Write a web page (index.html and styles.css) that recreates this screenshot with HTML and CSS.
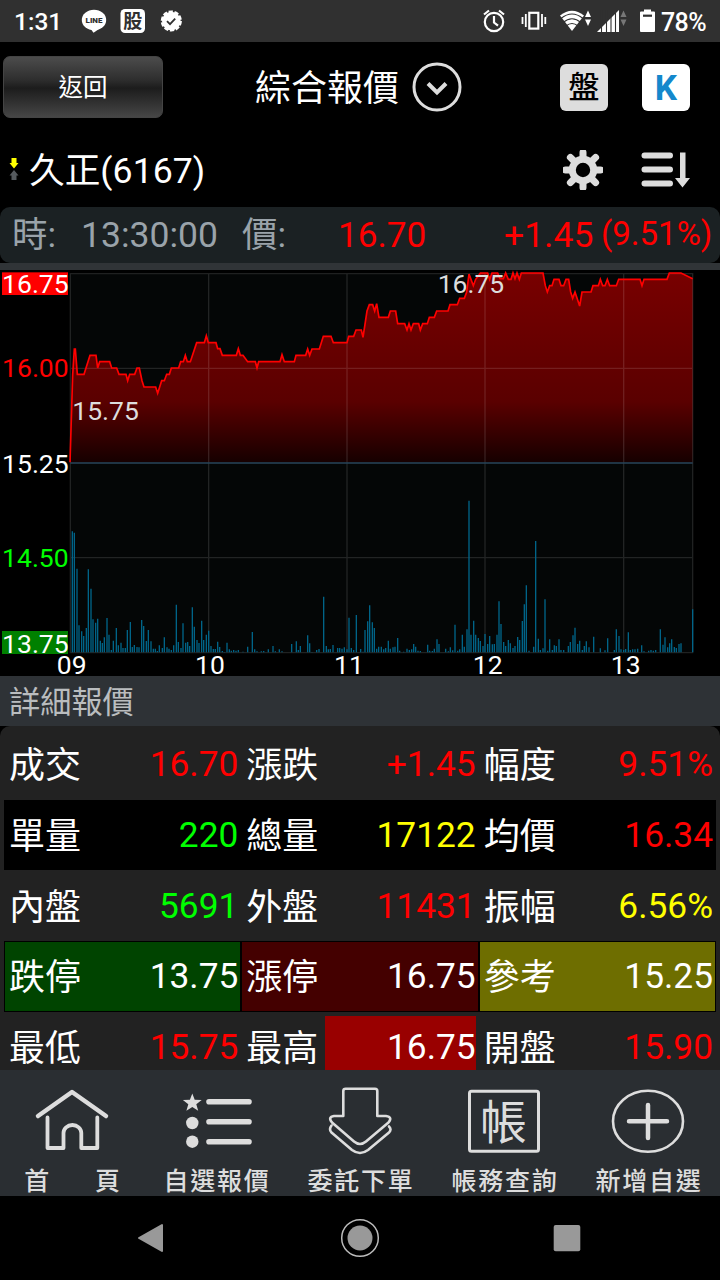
FILE: index.html
```html
<!DOCTYPE html>
<html lang="zh-Hant">

<head>
    <meta charset="UTF-8">
    <meta name="viewport" content="width=device-width, initial-scale=1.0">
    <title>綜合報價</title>

    <link rel="stylesheet" href="styles.css">
</head>
<body>

    <div class="status-bar">
        <span class="clock">1:31</span>
        <svg class="status-left" viewBox="80 0 104 42">
            <ellipse cx="94" cy="20" rx="12.2" ry="10.3" fill="#fff"/>
            <path d="M90 28L93.5 32.8Q98 30 102 26z" fill="#fff"/>
            <text x="94" y="22.8" class="line-text">LINE</text>
            <rect x="120.5" y="9" width="24.5" height="24" rx="4.5" fill="#fff"/>
            <text x="132.7" y="28" class="stock-text">股</text>
            <circle cx="171.3" cy="21" r="9.3" fill="#fff" stroke="#fff" stroke-width="2.6" stroke-dasharray="4.2 1.643"/>
            <path d="M167 21.2l3 3 5.2-5.6" fill="none" stroke="#303030" stroke-width="1.8"/>
        </svg>
        <svg class="status-right" viewBox="480 0 176 42">
            <!-- alarma -->
            <g fill="none" stroke="#fff" stroke-width="2.2">
                <circle cx="493" cy="22" r="9.2"/>
                <path d="M493 16v6.500l4 3.200M483 14.500l5-4M503 14.500l-5-4"/>
            </g>
            <!-- vibración -->
            <rect x="528.3" y="12.8" width="9" height="15.800" fill="none" stroke="#fff" stroke-width="2.2"/>
            <path d="M524.800 14v13M521.500 17v7M541 14v13M544.300 17v7" stroke="#fff" stroke-width="1.800"/>
            <!-- wifi -->
            <path d="M559 15.500Q571 6 583 15.500L571 31z" fill="#fff"/>
            <path d="M560 18.500Q571 9.500 582 18.500M562 22.500Q571 15 580 22.500M565 26Q571 21 577 26" fill="none" stroke="#303030" stroke-width="1.100"/>
            <path d="M584 17l3-6.500 3 6.500zM584 19.500l3 6.500 3-6.500z" fill="#fff"/>
            <!-- señal -->
            <path d="M596 32L618 10V32z" fill="#fff"/>
            <path d="M600.500 10v23M605.500 10v23M610 10v23M614.500 10v23" stroke="#303030" stroke-width="1.100"/>
            <path d="M619.500 17l3-6.500 3 6.500zM619.500 19.500l3 6.500 3-6.500z" fill="#777"/>
            <!-- batería -->
            <path d="M640 11.500h3V9.500h7v2h3a1 1 0 0 1 1 1V31a1 1 0 0 1-1 1h-13a1 1 0 0 1-1-1V12.500a1 1 0 0 1 1-1z" fill="#fff"/>
            <path d="M642 15.700h9" stroke="#303030" stroke-width="2.200"/>
        </svg>
        <span class="battery">78%</span>
    </div>

    <div class="header">
        <button class="btn">返回</button>
        <h1>綜合報價</h1>
        <svg class="drop" viewBox="0 0 50 50">
            <circle cx="25" cy="25" r="23"/>
            <path d="M16 21.500l9 9 9-9" stroke-width="4"/>
        </svg>
        <span class="square gray">盤</span>
        <span class="square white">K</span>
    </div>

    <div class="name-row">
        <svg class="arrows" viewBox="0 0 10 24">
            <path d="M2.500 0h5v5H9.500L5 10.500.500 5h2z" fill="#ff0"/>
            <path d="M5 12l4.500 5.500h-2V22h-5v-4.500h-2z" fill="#555a5e"/>
        </svg>
        <span class="name">久正(6167)</span>
        <svg class="gear" viewBox="-20 -20 40 40">
            <circle r="10.700"/>
            <path d="M0-12V-17.500M0 12V17.500M-12 0H-17.500M12 0H17.500M-8.500-8.500L-12.600-12.600M8.500 8.500L12.600 12.600M-8.500 8.500L-12.600 12.600M8.500-8.500L12.600-12.600"/>
        </svg>
        <svg class="sort" viewBox="0 0 50 36">
            <path d="M3.500 3.500H29M3.500 17.500H29M3.500 31.500H29" stroke="#ddd" stroke-width="6" stroke-linecap="round"/>
            <path d="M39 .500h5.500V26H49L41.500 35.500 34 26h5z" fill="#ddd"/>
        </svg>
    </div>

    <div class="quote-bar">
        <span class="t-label">時:</span>
        <span class="t-time">13:30:00</span>
        <span class="t-label2">價:</span>
        <span class="t-price">16.70</span>
        <span class="t-change">+1.45</span>
        <span class="t-percent">(9.51%)</span>
    </div>

    <svg class="chart" viewBox="0 30 2160 1218">
        <defs>
            <linearGradient id="redFill" gradientUnits="userSpaceOnUse" x1="0" y1="39" x2="0" y2="607">
                <stop offset="0" stop-color="#780000"/>
                <stop offset="0.68" stop-color="#5a0000"/>
                <stop offset="1" stop-color="#160000"/>
            </linearGradient>
        </defs>
        <rect x="211" y="41" width="1867" height="1137" fill="#040606"/>
        <path id="priceArea" fill="url(#redFill)"/>
        <path class="grid" d="M211 41H2078V1178H211zM626 41V1178M1041 41V1178M1455 41V1178M1871 41V1178M211 325H2078M211 893H2078"/>
        <path id="volume"/>
        <path d="M211 609H2078" stroke="#29445a" stroke-width="5"/>
        <path id="priceLine"/>

        <rect x="6" y="37" width="198" height="68" fill="#f00"/>
        <rect x="6" y="1113" width="198" height="69" fill="#008000"/>
        <g class="axis" text-anchor="end">
            <text x="206" y="98">16.75</text>
            <text x="206" y="352" fill="#f00">16.00</text>
            <text x="206" y="638">15.25</text>
            <text x="206" y="922" fill="#0f0">14.50</text>
            <text x="206" y="1178">13.75</text>
        </g>
        <g class="axis" text-anchor="middle">
            <text x="215" y="1243">09</text>
            <text x="630" y="1243">10</text>
            <text x="1047" y="1243">11</text>
            <text x="1463" y="1243">12</text>
            <text x="1877" y="1243">13</text>
        </g>
        <g class="axis mark">
            <text x="217" y="480">15.75</text>
            <text x="1313" y="100">16.75</text>
        </g>
    </svg>

    <div class="section-title">詳細報價</div>

    <div class="detail">
        <div class="row">
            <div class="cell"><span>成交</span><b class="red">16.70</b></div>
            <div class="cell"><span>漲跌</span><b class="red">+1.45</b></div>
            <div class="cell"><span>幅度</span><b class="red">9.51%</b></div>
        </div>
        <div class="row black">
            <div class="cell"><span>單量</span><b class="green">220</b></div>
            <div class="cell"><span>總量</span><b class="yellow">17122</b></div>
            <div class="cell"><span>均價</span><b class="red">16.34</b></div>
        </div>
        <div class="row">
            <div class="cell"><span>內盤</span><b class="green">5691</b></div>
            <div class="cell"><span>外盤</span><b class="red">11431</b></div>
            <div class="cell"><span>振幅</span><b class="yellow">6.56%</b></div>
        </div>
        <div class="row limits">
            <div class="cell down"><span>跌停</span><b>13.75</b></div>
            <div class="cell up"><span>漲停</span><b>16.75</b></div>
            <div class="cell ref"><span>參考</span><b>15.25</b></div>
        </div>
        <div class="row">
            <div class="cell"><span>最低</span><b class="red">15.75</b></div>
            <div class="cell"><span>最高</span><b class="hit">16.75</b></div>
            <div class="cell"><span>開盤</span><b class="red">15.90</b></div>
        </div>
    </div>

    <div class="tabs">
        <div class="tab">
            <svg viewBox="0 0 76 76">
                <path d="M4 32L38 8 72 32" stroke-width="4.500"/>
                <path d="M13.500 33.500V64H29.500V49a8.900 8 0 0 1 17.800 0V64H63.300V33.500" stroke-width="3.800"/>
            </svg>
            <span class="wide">首<i></i>頁</span>
        </div>
        <div class="tab">
            <svg viewBox="0 0 76 76">
                <path d="M14.300 9.500l2.400 6.200 7 .300-5.400 4.200 1.900 6.600-5.900-3.800-5.900 3.800 1.900-6.600L4.900 16l7-.300z" class="solid"/>
                <circle cx="14.300" cy="39" r="6.200" class="solid"/>
                <circle cx="14.300" cy="57.700" r="6.200" class="solid"/>
                <path d="M31 17.700H71M31 37.700H71M31 57.700H71" stroke-width="5.600"/>
            </svg>
            <span>自選報價</span>
        </div>
        <div class="tab">
            <svg viewBox="0 0 76 76">
                <path d="M21.300 32V7q0-2.300 2.300-2.300H53q2.300 0 2.300 2.300V32H64q7 1 2.500 6.500L44 57.500q-6 5-12 0L10 38.500Q5.500 33 12 32zM9.500 41.500q-3 4 0 7L30 66q8 6 16 0L67 48.500q3-3 0-6" stroke-width="2.600"/>
            </svg>
            <span>委託下單</span>
        </div>
        <div class="tab">
            <svg viewBox="0 0 76 76">
                <rect x="3.500" y="7.300" width="69" height="60" rx="2" stroke-width="3"/>
                <text x="37.500" y="54.500" class="account">帳</text>
            </svg>
            <span>帳務查詢</span>
        </div>
        <div class="tab">
            <svg viewBox="0 0 76 76">
                <ellipse cx="38" cy="37.300" rx="35" ry="30.500" stroke-width="2.600"/>
                <path d="M19 37.300H57M38 21V54" stroke-width="4.500"/>
            </svg>
            <span>新增自選</span>
        </div>
    </div>

    <div class="nav-bar">
        <svg viewBox="0 0 40 40"><path d="M7 20L30 7V33z" fill="#999" stroke="#999" stroke-width="2" stroke-linejoin="round"/></svg>
        <svg viewBox="0 0 40 40"><circle cx="20" cy="20" r="18.300" fill="none" stroke="#bbb" stroke-width="1.500"/><circle cx="20" cy="20" r="12.500" fill="#999"/></svg>
        <svg viewBox="0 0 40 40"><rect x="6.700" y="7" width="26.600" height="26.300" rx="2" fill="#999"/></svg>
    </div>

    <script src="script.js"></script>
</body>
</html>
```

FILE: styles.css
```css
body {
    margin: 0;
    padding: 0;
    width: 720px;
    height: 1280px;
    overflow: hidden;
    display: flex;
    flex-direction: column;
    background-color: #000;
    color: #fff;
    font-family: Roboto, 'Noto Sans CJK TC', sans-serif;
    font-size: 36px;
    line-height: 1;
}

svg {
    display: block;
    flex: none;
}

span, b {
    white-space: nowrap;
}

.status-bar {
    height: 42px;
    flex: none;
    box-sizing: border-box;
    padding: 0 14px;
    display: flex;
    align-items: center;
    background-color: #303030;
    font-size: 25px;
    font-weight: 500;
}

.clock {
    width: 66px;
    padding-top: 3px;
    font-size: 24.5px;
}

.battery {
    padding: 3px 0 0 4px;
    letter-spacing: -0.6px;
}

.status-left {
    width: 104px;
    height: 42px;
    margin-right: auto;
}

.status-right {
    width: 176px;
    height: 42px;
    margin-right: 0;
}

.line-text {
    font-size: 8px;
    font-weight: 900;
    fill: #303030;
    text-anchor: middle;
}

.stock-text {
    font-size: 19px;
    font-weight: 700;
    fill: #303030;
    text-anchor: middle;
}

.header {
    height: 90px;
    flex: none;
    display: flex;
    align-items: center;
}

.btn {
    width: 160px;
    height: 62px;
    margin: 0 92px 0 3px;
    padding: 2px 0 0;
    flex: none;
    border: 1px solid #444;
    border-radius: 7px;
    background: linear-gradient(#4c4c4c 0%, #2e2e2e 38%, #1c1c1c 52%, #464646 100%);
    color: #fff;
    font-family: inherit;
    font-size: 24.5px;
    line-height: 58px;
}

h1 {
    margin: 0;
    padding-top: 4px;
    width: 157px;
    flex: none;
    font-size: 36px;
    font-weight: 400;
}

.drop {
    width: 50px;
    height: 50px;
    margin-right: 98px;
    fill: none;
    stroke: #ddd;
    stroke-width: 3;
}

.square {
    width: 48px;
    height: 47px;
    margin-right: 34px;
    flex: none;
    border-radius: 6px;
    text-align: center;
    line-height: 48px;
}

.gray {
    background-color: #ddd;
    color: #000;
    font-size: 31px;
    font-weight: 500;
}

.white {
    background-color: #fff;
    color: #1488cc;
    font-size: 35px;
    font-weight: 700;
    line-height: 50px;
}

.name-row {
    height: 75px;
    flex: none;
    display: flex;
    align-items: center;
}

.arrows {
    width: 10px;
    height: 24px;
    margin: 0 10px 0 9px;
}

.name {
    width: 534px;
    padding-top: 4px;
    font-size: 35.7px;
}

.gear {
    width: 40px;
    height: 40px;
    margin-right: 38px;
    fill: none;
    stroke: #ddd;
    stroke-width: 7;
    stroke-linecap: round;
}

.sort {
    width: 50px;
    height: 36px;
}

.quote-bar {
    height: 56px;
    flex: none;
    border-radius: 10px;
    display: flex;
    align-items: center;
    background-color: #1b2123;
    color: #9aa3aa;
    font-size: 35.5px;
}

.t-label {
    width: 69px;
    padding: 2px 0 0 12px;
}

.t-time {
    width: 161px;
    padding-top: 1px;
}

.t-label2 {
    width: 96px;
    padding-top: 2px;
}

.t-price {
    width: 166px;
    padding-top: 1px;
    color: #f00;
    font-size: 35.2px;
}

.t-change {
    width: 97px;
    padding-top: 1px;
    color: #f00;
}

.t-percent {
    color: #f00;
    font-size: 33px;
    padding-bottom: 4px;
}

.chart {
    width: 720px;
    height: 406px;
    border-top: 7px solid #303437;
}

.grid {
    fill: none;
    stroke: #fff;
    stroke-opacity: 0.12;
    stroke-width: 4;
}

#volume {
    stroke: #006488;
    stroke-width: 4;
}

#priceLine {
    fill: none;
    stroke: #f00;
    stroke-width: 5;
}

.axis {
    fill: #fff;
    font-size: 79.5px;
}

.mark {
    fill: #ddd;
}

.section-title {
    height: 50px;
    flex: none;
    padding-left: 9px;
    background-color: #2e3236;
    color: #babdbf;
    font-size: 31.2px;
    line-height: 54px;
}

.detail {
    height: 344px;
    flex: none;
    box-sizing: border-box;
    padding: 3px 4px 0;
    overflow: hidden;
    border-radius: 10px 10px 0 0;
    background-color: #222;
}

.row {
    height: 70.7px;
    display: flex;
}

.black {
    background-color: #000;
}

.cell {
    flex: 1;
    display: flex;
    align-items: center;
    justify-content: space-between;
    padding: 0 3px 0 5px;
    line-height: 70px;
}

.cell span {
    padding-top: 4px;
    line-height: 66px;
}

.cell b {
    font-size: 35.3px;
    font-weight: 400;
}

.red {
    color: #f00;
}

.green {
    color: #0f0;
}

.yellow {
    color: #ff0;
}

.limits .cell {
    box-sizing: border-box;
    border: 1px solid #000;
    padding: 0 2px 0 4px;
    line-height: 66px;
}

.down {
    background-color: #004400;
}

.up {
    background-color: #440000;
}

.ref {
    background-color: #6e6e00;
}

.cell .hit {
    width: 151px;
    margin-top: 4px;
    line-height: 62px;
    padding-bottom: 4px;
    text-align: right;
    background-color: #990000;
}

.tabs {
    height: 126px;
    flex: none;
    display: flex;
    background-color: #2a2e32;
    color: #ddd;
}

.tab {
    width: 144px;
    display: flex;
    flex-direction: column;
    align-items: center;
    padding-top: 14px;
}

.tab svg {
    width: 76px;
    height: 76px;
    fill: none;
    stroke: #ddd;
    stroke-linecap: round;
    stroke-linejoin: round;
}

.tab .solid {
    fill: #ddd;
    stroke: none;
}

.tab .account {
    fill: #ddd;
    stroke: none;
    font-size: 47px;
    font-weight: 400;
    text-anchor: middle;
}

.tab span {
    margin-top: 9px;
    padding-left: 2px;
    font-size: 25px;
    font-weight: 500;
    line-height: 25px;
    letter-spacing: 1.8px;
}

.wide i {
    display: inline-block;
    width: 44px;
}

.nav-bar {
    height: 84px;
    flex: none;
    display: flex;
    align-items: center;
    justify-content: space-between;
    padding: 0 133px 0 132px;
}

.nav-bar svg {
    width: 40px;
    height: 40px;
}
```

FILE: script.js
```javascript
// x, y de cada punto de la línea de precio (antes y después de las 11)
const priceEarly = [
    [210, 607], [218, 345], [223, 267], [226, 267], [232, 343], [252, 343], [270, 286], [288, 286], [293, 324],
    [299, 305], [329, 305], [335, 324], [350, 324], [357, 343], [378, 343], [383, 362], [389, 343], [404, 343],
    [411, 324], [418, 324], [426, 362], [432, 381], [467, 381], [473, 400], [485, 362], [493, 362], [500, 343],
    [508, 343], [514, 324], [536, 324], [542, 305], [550, 305], [556, 286], [562, 305], [571, 305], [590, 248],
    [613, 248], [619, 227], [625, 248], [648, 248], [653, 266], [660, 266], [667, 286], [709, 286], [715, 266],
    [721, 286], [729, 286], [743, 305], [766, 305], [771, 324], [776, 305], [840, 305], [846, 284], [853, 305],
    [883, 305], [888, 286], [917, 286], [923, 267], [929, 286], [936, 267], [958, 267], [970, 229], [993, 229],
    [1000, 248], [1041, 248], [1046, 229], [1061, 229], [1068, 210]
];
const priceLate = [
    [4, 210], [9, 232], [21, 153], [28, 134], [38, 134], [44, 153], [50, 131], [57, 172], [85, 172], [91, 153],
    [107, 153], [113, 191], [134, 191], [141, 210], [147, 191], [153, 210], [160, 191], [176, 191], [181, 210],
    [188, 191], [202, 191], [208, 172], [223, 172], [230, 153], [264, 153], [270, 134], [292, 134], [299, 115],
    [313, 115], [320, 96], [327, 42], [333, 58], [340, 77], [347, 58], [355, 48], [361, 39], [383, 39], [389, 58],
    [396, 39], [413, 39], [420, 56], [430, 56], [437, 39], [445, 58], [453, 58], [459, 39], [465, 56], [471, 39],
    [478, 58], [484, 39], [549, 39], [556, 77], [562, 96], [569, 77], [576, 77], [582, 58], [597, 58], [603, 77],
    [611, 77], [618, 58], [626, 58], [632, 96], [638, 115], [645, 96], [659, 138], [666, 96], [693, 96], [699, 77],
    [715, 77], [721, 58], [728, 77], [735, 77], [742, 58], [749, 77], [769, 77], [776, 58], [840, 58], [846, 77],
    [852, 58], [921, 58], [928, 39], [963, 39], [998, 56]
];

// x y tope de cada barra de volumen
const volumeEarly = [
    [217, 214], [223, 218], [231, 326], [237, 496], [245, 514], [251, 528], [259, 504], [265, 328], [273, 386],
    [279, 478], [287, 488], [293, 476], [301, 542], [307, 549], [313, 532], [321, 474], [327, 524], [334, 570],
    [340, 542], [349, 504], [355, 556], [363, 548], [369, 564], [376, 564], [382, 510], [391, 486], [397, 561],
    [403, 555], [411, 561], [417, 562], [425, 480], [431, 498], [439, 543], [445, 510], [453, 544], [460, 566],
    [466, 566], [472, 573], [478, 556], [487, 564], [493, 532], [501, 562], [507, 566], [514, 570], [521, 556],
    [529, 434], [535, 546], [543, 564], [549, 490], [557, 548], [563, 546], [569, 558], [577, 442], [583, 500],
    [591, 540], [597, 549], [605, 482], [611, 540], [619, 524], [626, 512], [633, 558], [640, 567], [646, 567],
    [653, 545], [659, 561], [667, 573], [673, 576], [681, 548], [688, 568], [694, 572], [701, 570], [708, 572],
    [715, 570], [729, 575], [743, 560], [757, 516], [764, 568], [771, 574], [784, 574], [791, 573], [805, 568],
    [819, 558], [826, 574], [838, 568], [846, 574], [875, 552], [889, 544], [895, 570], [901, 558], [923, 526],
    [929, 550], [936, 576], [950, 570], [957, 567], [971, 410], [979, 558], [985, 568], [991, 567], [999, 555],
    [1013, 564], [1019, 564], [1026, 566], [1033, 562], [1041, 568], [1047, 473], [1054, 564], [1061, 570], [1069, 465]
];
const volumeLate = [
    [2, 567], [9, 575], [15, 510], [23, 484], [29, 436], [37, 487], [43, 504], [50, 566], [56, 560], [64, 560],
    [71, 568], [77, 564], [85, 542], [91, 566], [99, 562], [105, 560], [113, 534], [119, 572], [131, 575],
    [141, 566], [148, 570], [155, 568], [161, 552], [167, 560], [174, 572], [181, 573], [203, 554], [209, 572],
    [217, 573], [223, 566], [231, 538], [237, 552], [257, 566], [265, 574], [271, 562], [278, 571], [285, 494],
    [293, 572], [299, 568], [307, 524], [313, 560], [321, 508], [327, 122], [333, 524], [341, 482], [347, 524],
    [355, 534], [361, 543], [369, 558], [375, 522], [383, 552], [389, 528], [397, 553], [403, 552], [411, 524],
    [417, 424], [423, 492], [431, 546], [437, 558], [445, 540], [451, 550], [459, 564], [465, 558], [473, 531],
    [479, 540], [487, 483], [493, 433], [499, 376], [507, 572], [521, 560], [527, 243], [535, 536], [541, 570],
    [549, 565], [555, 418], [563, 572], [569, 538], [577, 570], [583, 556], [589, 558], [597, 538], [603, 570],
    [611, 570], [625, 558], [631, 546], [639, 526], [645, 503], [653, 552], [659, 542], [667, 570], [673, 558],
    [679, 544], [687, 562], [701, 530], [721, 565], [735, 571], [743, 535], [763, 570], [769, 508], [777, 528],
    [783, 568], [791, 570], [797, 567], [805, 517], [811, 570], [818, 568], [825, 568], [833, 566], [845, 556],
    [852, 574], [866, 572], [873, 570], [880, 572], [887, 570], [901, 508], [909, 554], [915, 532], [923, 562],
    [929, 550], [935, 538], [943, 561], [949, 564], [957, 552], [963, 550], [998, 448]
];

const half = 1080;
const shift = list => list.map(p => [p[0] + half, p[1]]);

const price = priceEarly.concat(shift(priceLate));
const line = 'M' + price.map(p => p.join(' ')).join('L');
document.getElementById('priceLine').setAttribute('d', line);
document.getElementById('priceArea').setAttribute('d', line + 'V607H210z');

const volume = volumeEarly.concat(shift(volumeLate));
document.getElementById('volume').setAttribute('d', volume.map(p => `M${p[0]} ${p[1] + 600}V1177`).join(''));
```
